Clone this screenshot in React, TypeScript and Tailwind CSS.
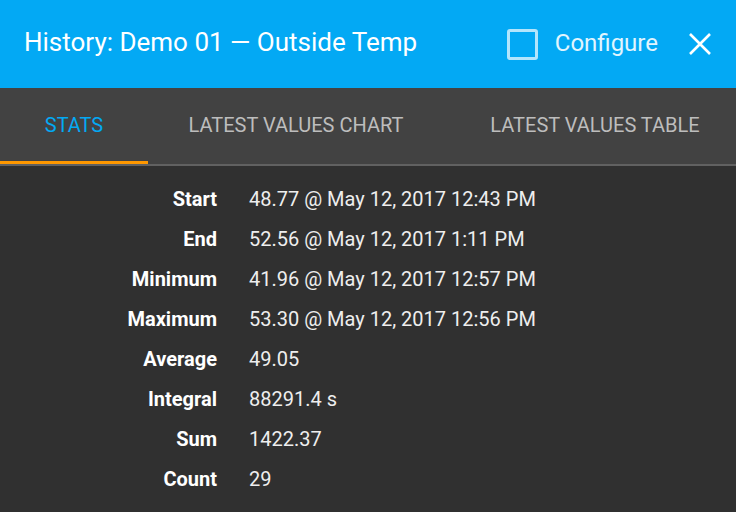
import React from "react"

const rows = [
  ["Start", "48.77 @ May 12, 2017 12:43 PM"],
  ["End", "52.56 @ May 12, 2017 1:11 PM"],
  ["Minimum", "41.96 @ May 12, 2017 12:57 PM"],
  ["Maximum", "53.30 @ May 12, 2017 12:56 PM"],
  ["Average", "49.05"],
  ["Integral", "88291.4 s"],
  ["Sum", "1422.37"],
  ["Count", "29"],
]

export default function App() {
  return (
    <div className="w-[736px] h-[512px] overflow-hidden bg-[#303030] font-['Roboto',sans-serif]">
      <header className="h-[88px] bg-[#03a9f4] flex items-center pl-6 pr-6 text-white">
        <h1 className="text-[26px] font-normal flex-1 pb-[4px]">History: Demo 01 — Outside Temp</h1>
        <div className="flex items-center mr-[30px]">
          <div className="w-[31px] h-[31px] border-[3px] border-[#b3e5fc] rounded-[3px] mr-[17px]" />
          <span className="text-[24px] text-[#e1f5fe] pb-[2px]">Configure</span>
        </div>
        <svg width="24" height="24" viewBox="0 0 24 24" className="text-white">
          <path d="M2 2 L22 22 M22 2 L2 22" stroke="currentColor" strokeWidth="2.6" />
        </svg>
      </header>

      <nav className="h-[78px] bg-[#424242] flex overflow-hidden border-b-2 border-[#616161] text-[20px] uppercase">
        <div className="w-[148px] shrink-0 flex items-center justify-center text-[#03a9f4] border-b-[3px] border-[#ff9800]">Stats</div>
        <div className="w-[296px] shrink-0 flex items-center justify-center text-[#bdbdbd] border-b-[3px] border-transparent">Latest Values Chart</div>
        <div className="w-[302px] shrink-0 flex items-center justify-center text-[#bdbdbd] border-b-[3px] border-transparent">Latest Values Table</div>
      </nav>

      <div className="pt-[13px]">
        {rows.map(([k, v]) => (
          <div key={k} className="flex h-[40px] items-center text-[20px]">
            <div className="w-[217px] text-right font-bold text-white">{k}</div>
            <div className="pl-[32px] text-[#eeeeee]">{v}</div>
          </div>
        ))}
      </div>
    </div>
  )
}
